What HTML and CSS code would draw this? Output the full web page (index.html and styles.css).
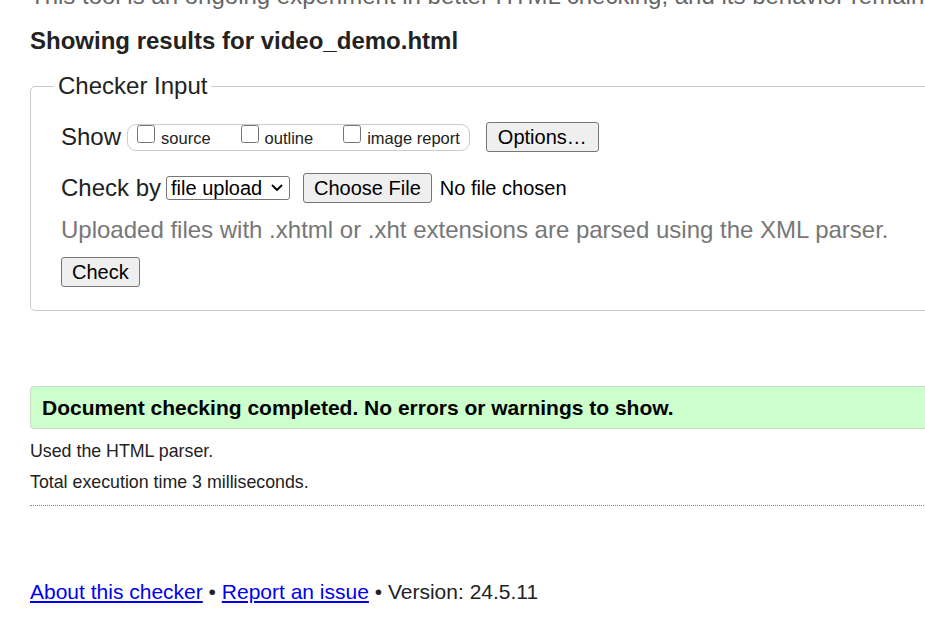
FILE: index.html
```html
<!DOCTYPE html>
<html lang="en">
<head>
<meta charset="utf-8">
<title>Showing results for video_demo.html - Nu Html Checker</title>
<link rel="stylesheet" href="styles.css">
</head>
<body>
<div class="page">
  <p class="intro">This tool is an ongoing experiment in better HTML checking, and its behavior remains subject to change</p>
  <h2 class="results-title">Showing results for video_demo.html</h2>
  <fieldset class="checker">
    <legend>Checker Input</legend>
    <div class="row show-row">
      <span class="row-label">Show</span>
      <span class="toggles">
        <label class="toggle"><input type="checkbox">source</label>
        <label class="toggle"><input type="checkbox">outline</label>
        <label class="toggle"><input type="checkbox">image report</label>
      </span>
      <button class="btn options-btn" type="button">Options…</button>
    </div>
    <div class="row checkby-row">
      <span class="row-label">Check by</span>
      <span class="select-wrap">
        <select class="method"><option>file upload</option></select>
        <svg class="chevron" width="12" height="8" viewBox="0 0 12 8" aria-hidden="true"><path d="M1.5 1.5 L6 6 L10.5 1.5" fill="none" stroke="#000" stroke-width="1.8" stroke-linecap="round" stroke-linejoin="round"/></svg>
      </span>
      <button class="btn file-btn" type="button">Choose File</button>
      <span class="file-status">No file chosen</span>
    </div>
    <p class="hint">Uploaded files with .xhtml or .xht extensions are parsed using the XML parser.</p>
    <button class="btn check-btn" type="submit">Check</button>
  </fieldset>
  <p class="success">Document checking completed. No errors or warnings to show.</p>
  <p class="stats">Used the HTML parser.</p>
  <p class="stats">Total execution time 3 milliseconds.</p>
  <hr class="sep">
  <p class="footer"><a href="#">About this checker</a> • <a href="#">Report an issue</a> • Version: 24.5.11</p>
</div>
</body>
</html>
```
FILE: styles.css
```css
html, body {
  margin: 0;
  padding: 0;
  overflow: hidden;
  background: #fff;
}
body {
  font-family: "Liberation Sans", Arial, sans-serif;
  color: #222;
}
.page {
  width: 1000px;
  padding-left: 30px;
}
.intro {
  margin: -18px 0 0;
  font-size: 24px;
  line-height: 28px;
  color: #666;
  white-space: nowrap;
}
.results-title {
  margin: 17px 0 0;
  font-size: 24px;
  line-height: 28px;
  font-weight: bold;
  color: #222;
}
.checker {
  margin: 17px 0 0;
  padding: 22px 30px 23px;
  border: 1px solid #ccc;
  border-radius: 5px;
}
.checker legend {
  margin-left: -7px;
  padding: 0 4px;
  font-size: 24px;
  line-height: 28px;
  color: #222;
}
.row {
  display: flex;
  align-items: center;
  height: 30px;
}
.row-label {
  font-size: 24px;
  line-height: 28px;
}
.toggles {
  display: flex;
  align-items: baseline;
  gap: 30px;
  height: 25px;
  margin-left: 6px;
  padding: 0 9px;
  border: 1px solid #ccc;
  border-radius: 9px;
  font-size: 16.5px;
  line-height: 25px;
  color: #222;
}
.toggle input {
  width: 18px;
  height: 18px;
  margin: 0 6px 0 0;
  vertical-align: 1px;
}
.btn {
  height: 30px;
  padding: 0 10px;
  font-family: "Liberation Sans", Arial, sans-serif;
  font-size: 20px;
  color: #000;
  background: #efefef;
  border: 1px solid #767676;
  border-radius: 3px;
}
.options-btn {
  margin-left: 16px;
  padding: 0 11px;
}
.checkby-row {
  margin-top: 21px;
}
.select-wrap {
  position: relative;
  display: inline-flex;
  margin-left: 5px;
}
.method {
  appearance: none;
  -webkit-appearance: none;
  width: 124px;
  height: 24px;
  padding: 0 0 0 4px;
  font-family: "Liberation Sans", Arial, sans-serif;
  font-size: 20px;
  line-height: 22px;
  color: #000;
  border: 1px solid #767676;
  border-radius: 3px;
  background: #fff;
}
.chevron {
  position: absolute;
  right: 7px;
  top: 8px;
  pointer-events: none;
}
.file-btn {
  margin-left: 13px;
}
.file-status {
  margin-left: 8px;
  font-size: 20px;
  color: #000;
}
.hint {
  margin: 13px 0 0;
  font-size: 24px;
  line-height: 28px;
  color: #777;
  white-space: nowrap;
}
.check-btn {
  margin-top: 13px;
}
.success {
  margin: 75px 0 0;
  padding: 0 11px;
  height: 41px;
  line-height: 41px;
  font-size: 21px;
  font-weight: bold;
  color: #000;
  background: #ccffcc;
  border: 1px solid #c6dcc6;
  border-radius: 4px;
}
.stats {
  margin: 7px 0 0;
  font-size: 17.8px;
  line-height: 24px;
  color: #222;
}
.success + .stats {
  margin-top: 10px;
}
.sep {
  margin: 11px 0 0;
  border: 0;
  border-top: 1px dotted #888;
  height: 0;
}
.footer {
  margin: 74px 0 0;
  font-size: 21px;
  line-height: 24px;
  color: #222;
}
.footer a {
  color: #00e;
}
```
